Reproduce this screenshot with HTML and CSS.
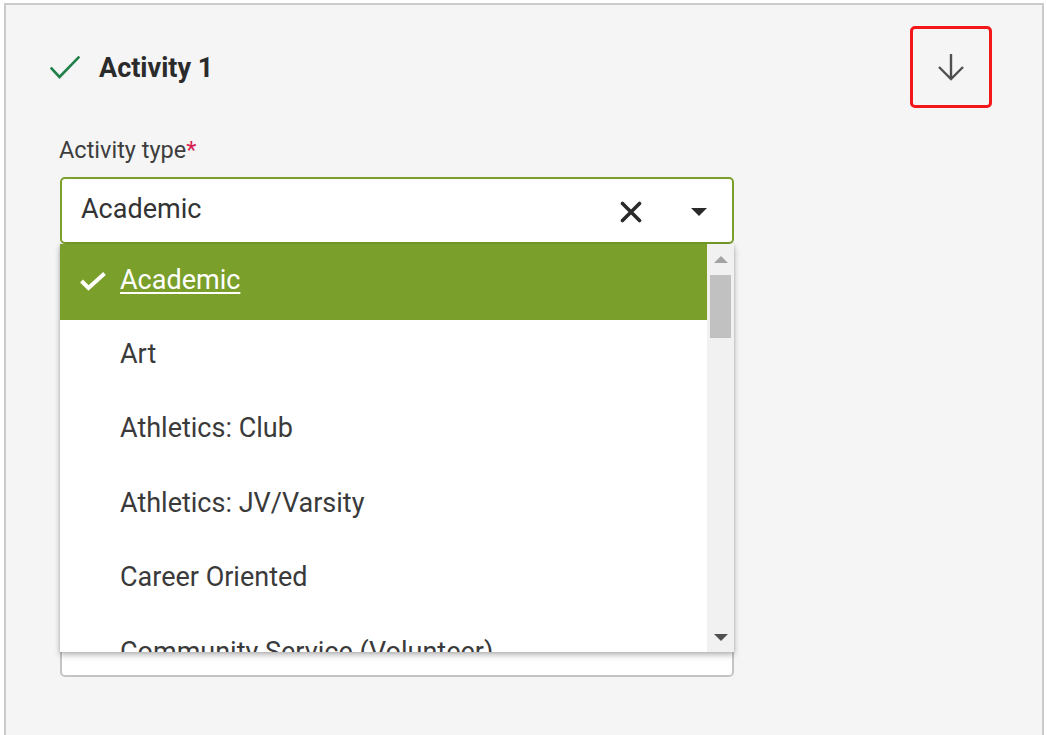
FILE: index.html
```html
<!DOCTYPE html>
<html lang="en">
<head>
<meta charset="utf-8">
<title>Activity 1</title>
<link rel="stylesheet" href="styles.css">
</head>
<body>
<section class="card">
  <header class="card-header">
    <div class="title-group">
      <svg class="done-icon" width="30" height="24" viewBox="0 0 30 24" aria-hidden="true">
        <path d="M1.5 12.5 L9.5 21 L28.5 1.5" fill="none" stroke="#22804a" stroke-width="2.6" stroke-linecap="square"/>
      </svg>
      <h2 class="title">Activity 1</h2>
    </div>
    <button class="move-btn" type="button" aria-label="Move down">
      <svg width="30" height="30" viewBox="0 0 30 30" aria-hidden="true">
        <path d="M15 2 V27 M3 15 L15 27 L27 15" fill="none" stroke="#505050" stroke-width="2.4"/>
      </svg>
    </button>
  </header>

  <div class="form">
    <div class="field">
      <label class="label">Activity type<span class="req">*</span></label>
      <div class="select-wrap">
        <div class="select">
          <span class="select-value">Academic</span>
          <span class="clear-btn">
            <svg width="22" height="22" viewBox="0 0 22 22" aria-hidden="true">
              <path d="M2.5 2.5 L19.5 19.5 M19.5 2.5 L2.5 19.5" stroke="#2a2a2a" stroke-width="3.6" stroke-linecap="round"/>
            </svg>
          </span>
          <span class="caret-btn">
            <svg width="16" height="8" viewBox="0 0 16 8" aria-hidden="true">
              <path d="M0 0 H16 L8 8 Z" fill="#2a2a2a"/>
            </svg>
          </span>
        </div>
        <div class="dropdown">
          <ul class="options">
            <li class="option selected">
              <svg class="opt-check" width="28" height="20" viewBox="0 0 28 20" aria-hidden="true">
                <path d="M2.5 10 L9.5 17 L25.5 2.5" fill="none" stroke="#ffffff" stroke-width="4"/>
              </svg>
              <span class="opt-text">Academic</span>
            </li>
            <li class="option"><span class="opt-text">Art</span></li>
            <li class="option"><span class="opt-text">Athletics: Club</span></li>
            <li class="option"><span class="opt-text">Athletics: JV/Varsity</span></li>
            <li class="option"><span class="opt-text">Career Oriented</span></li>
            <li class="option"><span class="opt-text">Community Service (Volunteer)</span></li>
          </ul>
          <div class="scrollbar">
            <div class="sb-btn">
              <svg width="14" height="7" viewBox="0 0 14 7" aria-hidden="true"><path d="M0 7 H14 L7 0 Z" fill="#a3a3a3"/></svg>
            </div>
            <div class="sb-thumb"></div>
            <div class="sb-space"></div>
            <div class="sb-btn">
              <svg width="14" height="7" viewBox="0 0 14 7" aria-hidden="true"><path d="M0 0 H14 L7 7 Z" fill="#505050"/></svg>
            </div>
          </div>
        </div>
      </div>
    </div>

    <div class="field">
      <div class="input tall"></div>
    </div>
  </div>
</section>
</body>
</html>
```

FILE: styles.css
```css
* { box-sizing: border-box; }

html, body {
  margin: 0;
  padding: 0;
  background: #ffffff;
  height: 735px;
  overflow: hidden;
  font-family: Roboto, "Liberation Sans", Arial, sans-serif;
  color: #333333;
}

.card {
  margin: 3px 0 0 4px;
  width: 1040px;
  min-height: 760px;
  background: #f5f5f5;
  border: 2px solid #cbcbcb;
  border-bottom: 0;
  padding: 21px 50px 0 44px;
}

.card-header {
  display: flex;
  align-items: center;
  justify-content: space-between;
  height: 82px;
}

.title-group {
  display: flex;
  align-items: center;
  gap: 19px;
}

.done-icon { display: block; margin-top: 2px; }

.title {
  margin: 0;
  font-size: 27px;
  font-weight: 700;
  color: #2b2b2b;
  line-height: 32px;
  padding-top: 2px;
}

.move-btn {
  width: 82px;
  height: 82px;
  border: 3px solid #f4171a;
  border-radius: 5px;
  background: transparent;
  display: flex;
  align-items: center;
  justify-content: center;
  padding: 0;
}
.move-btn svg { display: block; }

.form {
  padding-left: 10px;
}

.field { margin-top: 30px; }

.label {
  display: block;
  font-size: 23.5px;
  line-height: 24px;
  color: #3d3d3d;
  margin-bottom: 15px;
  margin-left: -1px;
}
.req { color: #d6204f; }

.select-wrap {
  position: relative;
  width: 674px;
}

.select {
  height: 67px;
  border: 2px solid #7a9f2b;
  border-radius: 5px;
  background: #ffffff;
  display: flex;
  align-items: center;
  padding: 0 13px 0 19px;
}

.select-value {
  flex: 1;
  font-size: 27px;
  color: #333333;
  line-height: 32px;
  padding-bottom: 4px;
}

.clear-btn, .caret-btn {
  display: flex;
  align-items: center;
  justify-content: center;
  width: 40px;
  height: 40px;
}
.clear-btn { margin-right: 28px; margin-top: 2px; }
.caret-btn { margin-top: 2px; }
.clear-btn svg, .caret-btn svg { display: block; }

.dropdown {
  position: absolute;
  top: 100%;
  left: 0;
  width: 674px;
  height: 408px;
  background: #ffffff;
  display: flex;
  box-shadow: 0 3px 6px rgba(0, 0, 0, 0.28), 0 0 3px rgba(0, 0, 0, 0.12);
  z-index: 10;
  overflow: hidden;
}

.options {
  list-style: none;
  margin: 0;
  padding: 0;
  flex: 1;
  overflow: hidden;
}

.option {
  height: 74.4px;
  padding: 18px 0 0 60px;
  display: flex;
  align-items: flex-start;
  font-size: 27px;
  line-height: 32px;
  color: #3a3a3a;
  white-space: nowrap;
  position: relative;
}

.option.selected {
  background: #7a9f2b;
  color: #ffffff;
  height: 76px;
  padding-top: 20px;
}
.option.selected .opt-text {
  text-decoration: underline;
  text-decoration-thickness: 1.5px;
  text-underline-offset: 3px;
}

.opt-check {
  position: absolute;
  left: 19px;
  top: 27px;
  display: block;
}

.scrollbar {
  width: 27px;
  background: #f1f1f1;
  display: flex;
  flex-direction: column;
}

.sb-btn {
  height: 30px;
  display: flex;
  align-items: center;
  justify-content: center;
}
.sb-btn svg { display: block; }

.sb-thumb {
  height: 63px;
  margin: 1px 3px 0 3px;
  background: #c1c1c1;
}

.sb-space { flex: 1; }

.input {
  border: 2px solid #c4c4c4;
  border-radius: 5px;
  background: #ffffff;
  width: 674px;
}
.input.tall { height: 403px; }
```
